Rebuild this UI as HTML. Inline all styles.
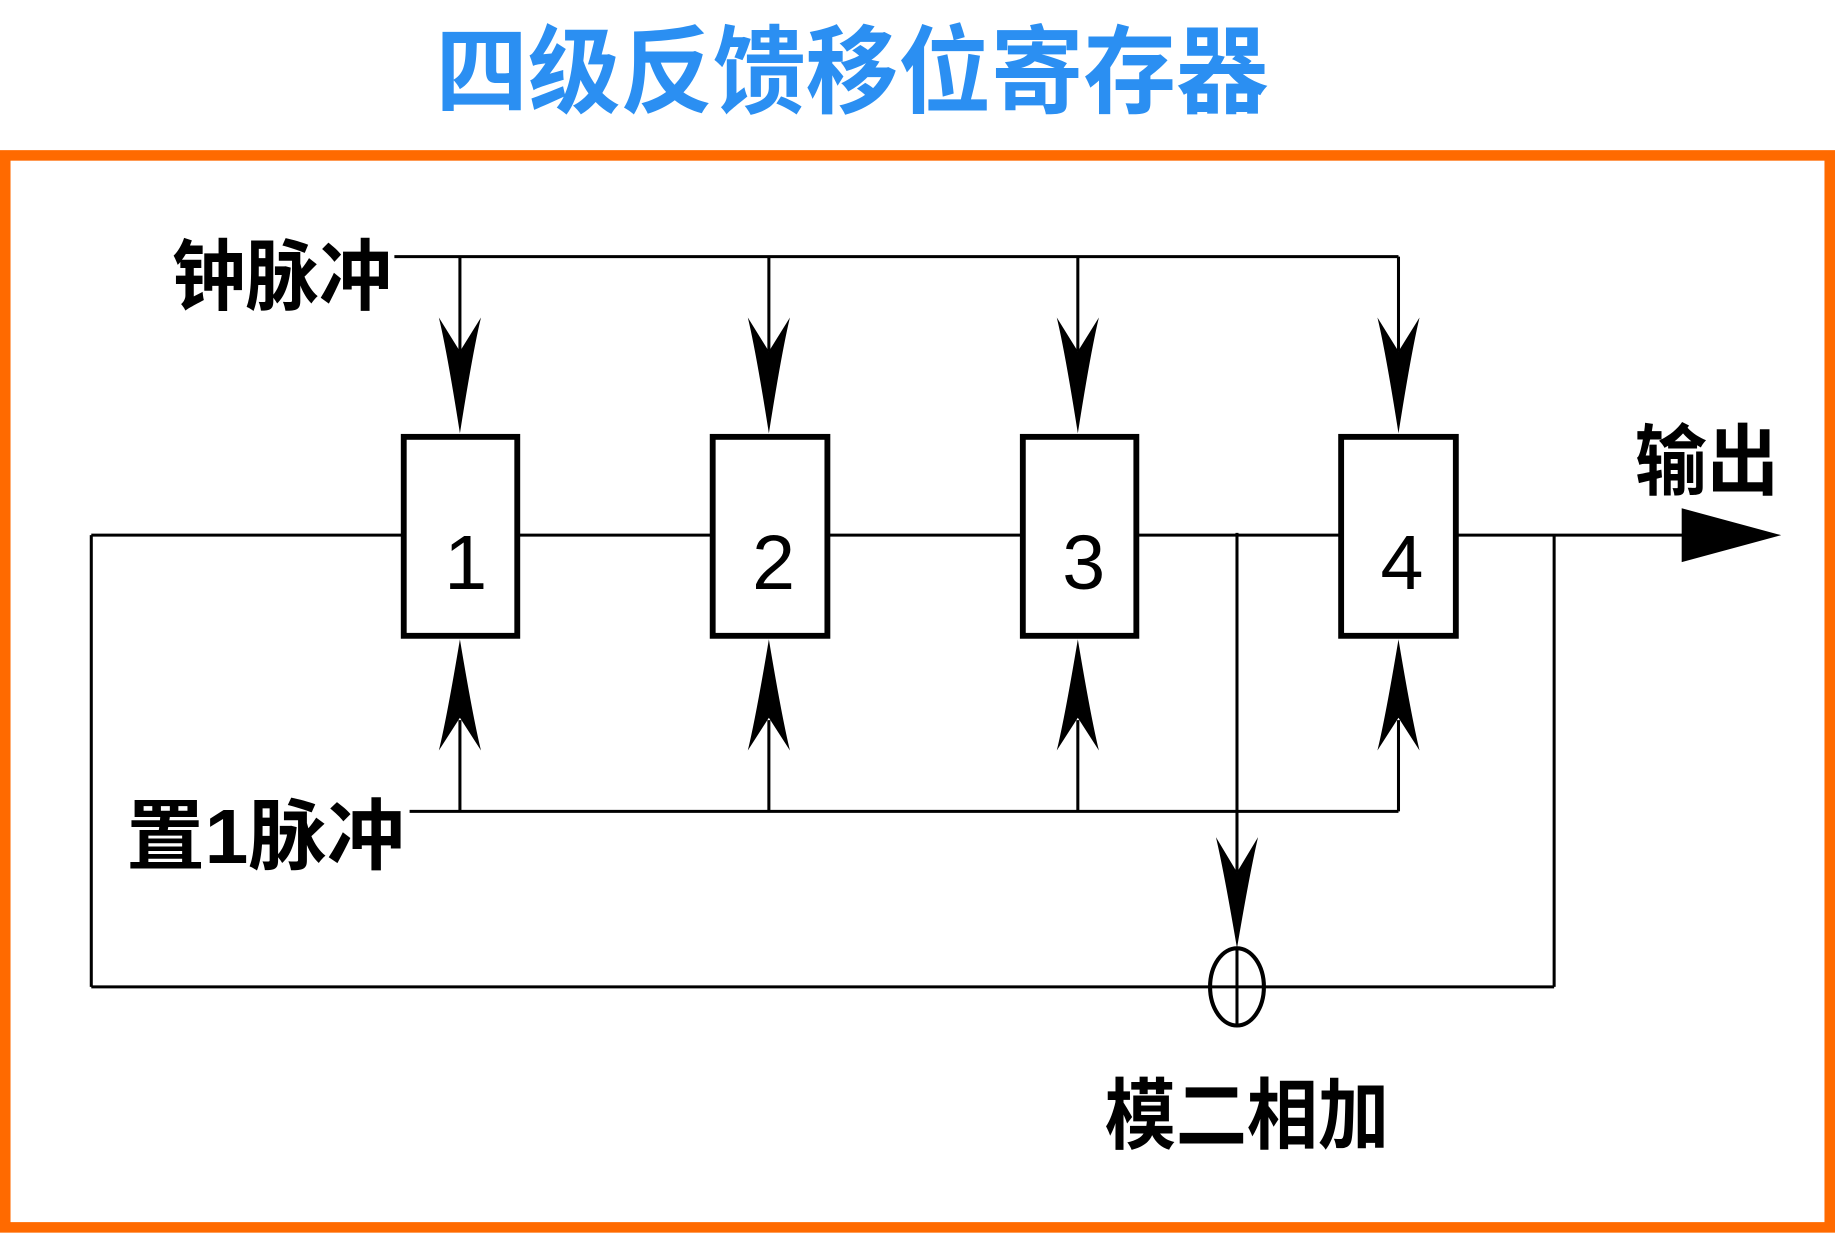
<!DOCTYPE html>
<html><head><meta charset="utf-8"><style>
html,body{margin:0;padding:0;background:#fff;}
svg{display:block}
text{font-family:"Liberation Sans","Noto Sans CJK SC",sans-serif;}
</style></head><body>
<svg width="1835" height="1233" viewBox="0 0 1568 1053" xmlns="http://www.w3.org/2000/svg">
<rect x="0" y="0" width="1568" height="1053" fill="#fff"/>
<text x="728" y="90" text-anchor="middle" font-size="82" font-weight="bold" fill="#2b8ff2" textLength="712" lengthAdjust="spacingAndGlyphs" style="font-family:'Noto Sans CJK SC',sans-serif">四级反馈移位寄存器</text>
<rect x="4.5" y="132.5" width="1559" height="916" fill="none" stroke="#ff6a00" stroke-width="9"/>
<g stroke="#000" stroke-width="2.6" fill="none">
<line x1="337" y1="219" x2="1195" y2="219"/>
<line x1="393" y1="219" x2="393" y2="300"/>
<line x1="657" y1="219" x2="657" y2="300"/>
<line x1="921" y1="219" x2="921" y2="300"/>
<line x1="1195" y1="219" x2="1195" y2="300"/>
<line x1="350" y1="693" x2="1195" y2="693"/>
<line x1="393" y1="693" x2="393" y2="615"/>
<line x1="657" y1="693" x2="657" y2="615"/>
<line x1="921" y1="693" x2="921" y2="615"/>
<line x1="1195" y1="693" x2="1195" y2="615"/>
<line x1="78" y1="457" x2="1440" y2="457"/>
<line x1="78" y1="457" x2="78" y2="843"/>
<line x1="78" y1="843" x2="1328" y2="843"/>
<line x1="1328" y1="457" x2="1328" y2="843"/>
<line x1="1057" y1="455" x2="1057" y2="745"/>
<line x1="1057" y1="810" x2="1057" y2="876"/>
<ellipse cx="1057" cy="843" rx="23" ry="33" stroke-width="3.5"/>
</g>
<g fill="#fff" stroke="#000" stroke-width="5">
<rect x="345" y="373" width="97" height="170"/>
<rect x="609" y="373" width="98" height="170"/>
<rect x="874" y="373" width="97" height="170"/>
<rect x="1146" y="373" width="98" height="170"/>
</g>
<g fill="#000">
<path d="M393 370 Q382 300 375 271 L393 300 L411 271 Q404 300 393 370Z"/>
<path d="M657 370 Q646 300 639 271 L657 300 L675 271 Q668 300 657 370Z"/>
<path d="M921 370 Q910 300 903 271 L921 300 L939 271 Q932 300 921 370Z"/>
<path d="M1195 370 Q1184 300 1177 271 L1195 300 L1213 271 Q1206 300 1195 370Z"/>
<path d="M393 546 Q382 612 375 641 L393 613 L411 641 Q404 612 393 546Z"/>
<path d="M657 546 Q646 612 639 641 L657 613 L675 641 Q668 612 657 546Z"/>
<path d="M921 546 Q910 612 903 641 L921 613 L939 641 Q932 612 921 546Z"/>
<path d="M1195 546 Q1184 612 1177 641 L1195 613 L1213 641 Q1206 612 1195 546Z"/>
<path d="M1057 810 Q1046 745 1039 715 L1057 745 L1075 715 Q1068 745 1057 810Z"/>
<path d="M1522 457 L1437 434 L1437 480Z"/>
</g>
<g font-size="66" text-anchor="middle" fill="#000">
<text x="398" y="503">1</text>
<text x="661" y="503">2</text>
<text x="926" y="503">3</text>
<text x="1198" y="503">4</text>
</g>
<g font-size="66" font-weight="bold" fill="#000" style="font-family:'Noto Sans CJK SC',sans-serif">
<text x="147" y="259" textLength="188" lengthAdjust="spacingAndGlyphs">钟脉冲</text>
<text x="108" y="737" textLength="238" lengthAdjust="spacingAndGlyphs">置1脉冲</text>
<text x="1397" y="417" textLength="123" lengthAdjust="spacingAndGlyphs">输出</text>
<text x="944" y="976" textLength="243" lengthAdjust="spacingAndGlyphs">模二相加</text>
</g>
</svg>
</body></html>
